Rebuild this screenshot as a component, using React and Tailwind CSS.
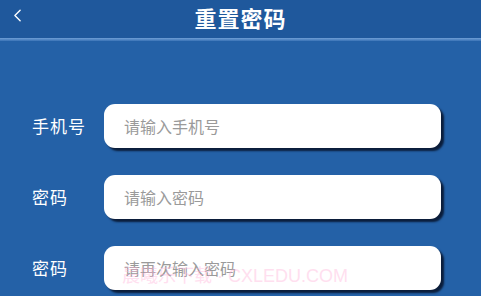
import { ChevronLeft } from "lucide-react";

const fields = [
  { label: "手机号", placeholder: "请输入手机号", type: "tel" },
  { label: "密码", placeholder: "请输入密码", type: "password" },
  { label: "密码", placeholder: "请再次输入密码", type: "password" },
];

function Field({ label, placeholder, type }) {
  return (
    <div className="flex items-center h-[44px]">
      <span className="w-[104px] pl-[32px] text-[17px] text-white tracking-[1px]">
        {label}
      </span>
      <input
        type={type}
        placeholder={placeholder}
        className="w-[337px] h-[44px] rounded-[11px] bg-white pl-[20px] text-[16px] text-[#333] placeholder:text-[#9a9a9a] outline-none shadow-[3px_3px_2px_#0b1d3a]"
      />
    </div>
  );
}

export default function App() {
  return (
    <div
      className="w-[481px] h-[296px] bg-[#2461a7] overflow-hidden relative"
      style={{ fontFamily: '"Noto Sans CJK SC", "Noto Sans", sans-serif' }}
    >
      <div className="h-[38px] bg-[#1f589c] flex items-center pb-[4px] relative">
        <ChevronLeft className="absolute left-[7px] top-[5px] text-white" size={21} strokeWidth={1.6} />
        <h1 className="w-full text-center text-white text-[22px] font-bold tracking-[1px]">
          重置密码
        </h1>
      </div>
      <div className="h-[3px] bg-gradient-to-b from-[#6f9fd6] to-[#3a73b6]" />
      <div className="flex flex-col gap-[27px] pt-[63px]">
        {fields.map((f, i) => (
          <Field key={i} {...f} />
        ))}
      </div>
      <div
        className="absolute left-[122px] top-[263px] text-[18px] text-[#ffb0d8] opacity-40 pointer-events-none"
        style={{ fontFamily: '"Liberation Sans", "Noto Sans CJK SC", sans-serif' }}
      >
        晨曦乐下载 · CXLEDU.COM
      </div>
    </div>
  );
}
